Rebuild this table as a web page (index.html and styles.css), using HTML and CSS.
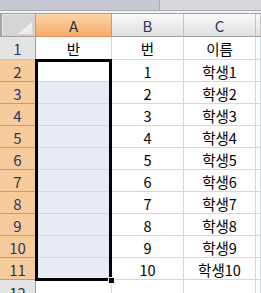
FILE: index.html
```html
<!DOCTYPE html>
<html lang="ko">
<head>
<meta charset="utf-8">
<link rel="stylesheet" href="styles.css">
</head>
<body>
<div class="sheet">
  <div class="topbar"><div class="tab"></div><div class="rest"></div></div>
  <div class="grid">
    <div class="corner"><span class="tri"></span></div>
    <div class="ch sel">A</div>
    <div class="ch">B</div>
    <div class="ch">C</div>
    <div class="ch"></div>

    <div class="rh">1</div><div class="c">반</div><div class="c">번</div><div class="c">이름</div><div class="c"></div>
    <div class="rh sel">2</div><div class="c act"></div><div class="c">1</div><div class="c">학생1</div><div class="c"></div>
    <div class="rh sel">3</div><div class="c hi"></div><div class="c">2</div><div class="c">학생2</div><div class="c"></div>
    <div class="rh sel">4</div><div class="c hi"></div><div class="c">3</div><div class="c">학생3</div><div class="c"></div>
    <div class="rh sel">5</div><div class="c hi"></div><div class="c">4</div><div class="c">학생4</div><div class="c"></div>
    <div class="rh sel">6</div><div class="c hi"></div><div class="c">5</div><div class="c">학생5</div><div class="c"></div>
    <div class="rh sel">7</div><div class="c hi"></div><div class="c">6</div><div class="c">학생6</div><div class="c"></div>
    <div class="rh sel">8</div><div class="c hi"></div><div class="c">7</div><div class="c">학생7</div><div class="c"></div>
    <div class="rh sel">9</div><div class="c hi"></div><div class="c">8</div><div class="c">학생8</div><div class="c"></div>
    <div class="rh sel">10</div><div class="c hi"></div><div class="c">9</div><div class="c">학생9</div><div class="c"></div>
    <div class="rh sel">11</div><div class="c hi"></div><div class="c">10</div><div class="c">학생10</div><div class="c"></div>
    <div class="rh last">12</div><div class="c"></div><div class="c"></div><div class="c"></div><div class="c"></div>
  </div>
  <div class="selection"><span class="handle"></span></div>
</div>
</body>
</html>
```

FILE: styles.css
```css
* { box-sizing: border-box; }
html, body { margin: 0; padding: 0; background: #fff; }
body { width: 261px; height: 293px; overflow: hidden; }
.sheet {
  position: relative;
  width: 261px;
  height: 293px;
  overflow: hidden;
  font-family: "Noto Sans CJK KR", "Liberation Sans", sans-serif;
  font-size: 14.5px;
  color: #000;
}
.topbar {
  display: flex;
  height: 14px;
  border-bottom: 1px solid #9d9fa5;
  box-shadow: inset 0 -2px 0 #f2f3f5;
}
.topbar .tab {
  width: 160px;
  height: 11px;
  background: #c6c9d2;
  border-right: 1px solid #a7aab2;
  border-bottom: 1px solid #a7aab2;
}
.topbar .rest {
  flex: 1;
  height: 11px;
  background: #d6d8de;
  border-bottom: 1px solid #a7aab2;
}
.grid {
  display: grid;
  grid-template-columns: 36px 76px 72px 72px 1fr;
  grid-template-rows: 23px 23px repeat(11, 22px);
}
.corner {
  position: relative;
  background: #d4d4d4;
  border-left: 2px solid #a6a6a6;
  border-right: 1px solid #9e9e9e;
  border-bottom: 1px solid #9e9e9e;
  box-shadow: inset 1px 1px 0 #e8e8e8;
}
.corner .tri {
  position: absolute;
  right: 3px;
  bottom: 2px;
  width: 14px;
  height: 12px;
  background: linear-gradient(135deg, #ffffff, #e4e4e4);
  clip-path: polygon(100% 0, 100% 100%, 0 100%);
}
.ch {
  display: flex;
  align-items: center;
  justify-content: center;
  background: linear-gradient(#f9f9f9, #e0e0e0);
  border-right: 1px solid #c4c4c4;
  border-bottom: 1px solid #9e9e9e;
  color: #1f3a60;
  font-size: 15px;
  padding-top: 1px;
}
.ch.sel {
  background: linear-gradient(#fcd6ab, #f9a96a);
  border-right: 1px solid #e0925a;
  border-bottom: 1px solid #e0925a;
  color: #2a3040;
}
.rh {
  display: flex;
  align-items: center;
  justify-content: center;
  background: #e4e4e4;
  border-right: 1px solid #9e9e9e;
  border-bottom: 1px solid #c6c6c6;
  color: #1f3a60;
  font-size: 15px;
  padding-top: 1px;
}
.rh.last { align-items: flex-start; padding-top: 2px; }
.rh.sel {
  background: #f8cb9c;
  border-bottom: 1px solid #e3925a;
  border-right: 1px solid #e3925a;
}
.c {
  display: flex;
  align-items: center;
  justify-content: center;
  border-right: 1px solid #d0d7e5;
  border-bottom: 1px solid #d0d7e5;
  background: #fff;
  padding-top: 1px;
}
.c.hi { background: #e8ebf4; }
.c.act { background: #fff; }
.selection {
  position: absolute;
  left: 35px;
  top: 59px;
  width: 77px;
  height: 222px;
  border: 3px solid #000;
  pointer-events: none;
}
.handle {
  position: absolute;
  right: -6px;
  bottom: -6px;
  width: 7px;
  height: 7px;
  background: #000;
  border: 1px solid #fff;
}
```
